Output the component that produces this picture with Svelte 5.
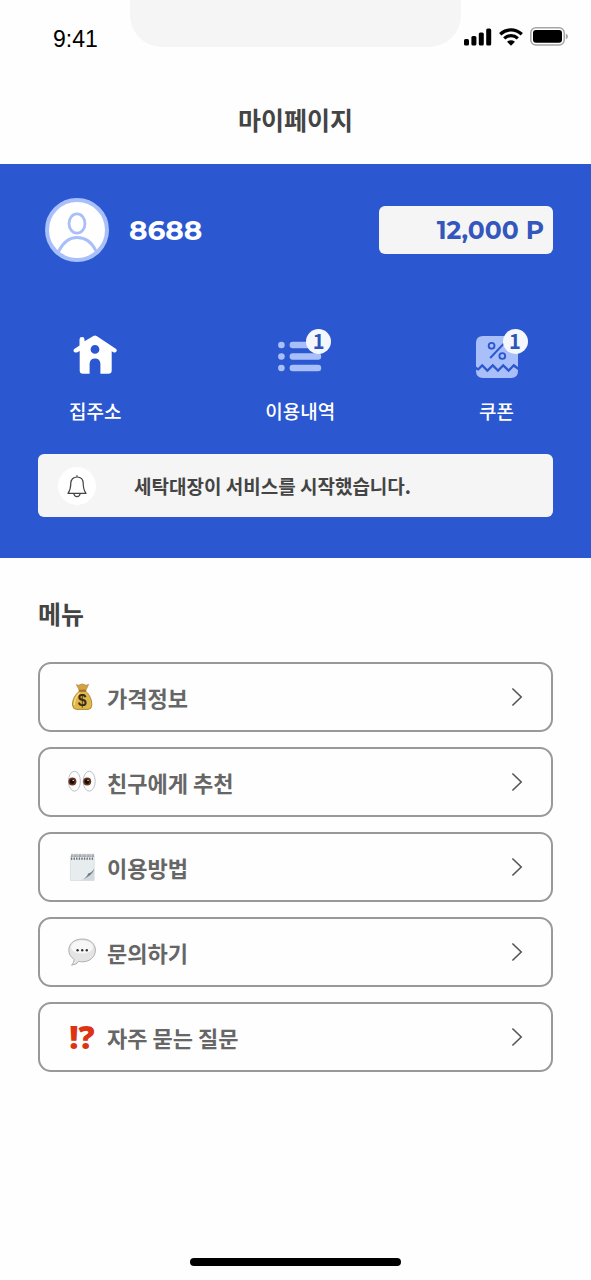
<script lang="ts">
  type Shortcut = { icon: "home" | "list" | "coupon", label: string, count?: number };
  type MenuItem = { icon: "money" | "eyes" | "note" | "chat" | "question", label: string };

  let userName = "8688";
  let points = 12000;
  let notice = "세탁대장이 서비스를 시작했습니다.";

  const shortcuts: Shortcut[] = [
    { icon: "home", label: "집주소" },
    { icon: "list", label: "이용내역", count: 1 },
    { icon: "coupon", label: "쿠폰", count: 1 }
  ];

  const menu: MenuItem[] = [
    { icon: "money", label: "가격정보" },
    { icon: "eyes", label: "친구에게 추천" },
    { icon: "note", label: "이용방법" },
    { icon: "chat", label: "문의하기" },
    { icon: "question", label: "자주 묻는 질문" }
  ];
</script>

<div class="page">
  <div class="status-bar">
    <span class="time">9:41</span>
    <div class="notch"></div>
    <div class="status-icons">
      <svg width="28" height="18" viewBox="0 0 28 18" aria-hidden="true">
        <rect x="0" y="11" width="5" height="6.5" rx="1.5" />
        <rect x="7.4" y="8" width="5" height="9.5" rx="1.5" />
        <rect x="14.8" y="4.4" width="5" height="13.1" rx="1.5" />
        <rect x="22.2" y="0.4" width="5" height="17.1" rx="1.5" />
      </svg>
      <svg width="24" height="18" viewBox="0 0 24 18" aria-hidden="true">
        <g fill="none" stroke="#000" stroke-width="3.2">
          <path d="M1.2 6.2Q6 1.8 12 1.8T22.8 6.2" />
          <path d="M5.2 10.4Q8.2 7.6 12 7.6T18.8 10.4" />
        </g>
        <path d="M8 13.7Q12 10.8 16 13.7L12 17.8Z" />
      </svg>
      <svg width="38" height="19" viewBox="0 0 38 19" aria-hidden="true">
        <rect x="0.8" y="0.8" width="33.4" height="17.2" rx="5" fill="#fff" stroke="#a5a5a5" stroke-width="1.5" />
        <rect x="3" y="3" width="29" height="12.8" rx="3" />
        <path d="M35.8 6.5Q38 7.6 38 9.5T35.8 12.5Z" fill="#a5a5a5" />
      </svg>
    </div>
  </div>

  <header>
    <h1>마이페이지</h1>
  </header>

  <section class="hero">
    <div class="profile">
      <svg width="64" height="64" viewBox="0 0 64 64" aria-hidden="true">
        <circle cx="32" cy="32" r="30" fill="#fff" stroke="#a9bffa" stroke-width="4" />
        <g fill="none" stroke="#a9bffa" stroke-width="2.8">
          <ellipse cx="32" cy="25.5" rx="8" ry="9.6" />
          <path d="M13.5 53.5C18 44.5 24 39.5 32 39.5S47 44.5 51 53" />
        </g>
      </svg>
      <strong class="name">{userName}</strong>
      <div class="points">{points.toLocaleString("en-US")} P</div>
    </div>

    <nav class="shortcuts">
      {#each shortcuts as item}
        <button type="button">
          <span class="icon">
            <svg width="44" height="44" viewBox="0 0 44 44" aria-hidden="true">
              {#if item.icon === "home"}
                <path fill="#fff" fill-rule="evenodd" d="M6.5 8V5.4Q6.5 3 9 3T11.5 5.4V7.3L20.4 2Q22 1 23.6 2L42.8 14.7Q44.4 16 43.4 17.6Q42.4 19 40.4 18.2L38.7 17.3V36.5Q38.7 39.7 35.4 39.7H27.4V29.8Q27 24.6 22 24.6T16.6 29.8V39.7H10Q6.7 39.7 6.7 36.5V17L3.8 18.4Q1.6 19 .8 17.6Q0 16 1.6 14.8L6.5 11.4ZM22 11A4.4 4.4 0 1 0 22 19.8A4.4 4.4 0 1 0 22 11Z" />
              {:else if item.icon === "list"}
                <g fill="#a9bffa">
                  {#each [11, 22.5, 34] as y}
                    <circle cx="3.4" cy={y} r="3.3" />
                    <rect x="11.6" y={y - 3.2} width="31.6" height="6.4" rx="3" />
                  {/each}
                </g>
              {:else}
                <path fill="#a9bffa" d="M1 9Q1 2 8 2H36Q43 2 43 9V33L38.7 29.8L33.6 35L28.2 29.8L23 35L17.8 29.8L12.4 35L7.2 29.8L3 34L1 32.6Z" />
                <path fill="#a9bffa" d="M1 35.8L3.4 36.8L7.2 33L12.4 38.2L17.8 33L23 38.2L28.2 33L33.6 38.2L38.7 33L43 36V37Q43 44 36 44H8Q1 44 1 37Z" />
                <g fill="none" stroke="#2b57d0" stroke-width="1.9">
                  <circle cx="16.6" cy="11.8" r="2.9" />
                  <circle cx="27.3" cy="22" r="2.9" />
                  <path d="M28.8 9.6L15.2 24" stroke-width="2" />
                </g>
              {/if}
            </svg>
            {#if item.count}
              <span class="badge">{item.count}</span>
            {/if}
          </span>
          <span>{item.label}</span>
        </button>
      {/each}
    </nav>

    <div class="notice">
      <span class="bell">
        <svg width="22" height="24" viewBox="0 0 22 24" fill="none" stroke="#444" stroke-width="1.2" stroke-linejoin="round" aria-hidden="true">
          <path d="M11 1.2V3M2 19.4C4.2 16.4 4.8 14 4.8 9.6C4.8 5.4 7.2 3 11 3S17.2 5.4 17.2 9.6C17.2 14 17.8 16.4 20 19.4Z" />
          <path d="M7.8 19.6Q8.4 22.6 11 22.6T14.2 19.6" />
        </svg>
      </span>
      <p>{notice}</p>
    </div>
  </section>

  <main>
    <h2>메뉴</h2>
    <ul>
      {#each menu as item}
        <li>
          <button type="button" class="menu-item">
            {#if item.icon === "question"}
              <span class="marks" aria-hidden="true"><span>!</span><span>?</span></span>
            {:else}
              <svg width="28" height="28" viewBox="0 0 28 28" aria-hidden="true">
                {#if item.icon === "money"}
                  <path d="M8.4 1.6Q10.6 3 12.3 1.6Q14.5 .2 16 1.6Q18.4 2.8 20.6 1.4L17.8 7.4H11.3Z" fill="#d2a244" stroke="#a87a2a" stroke-width=".6" />
                  <path d="M11.3 8.2C6.8 12 4.3 16.7 4.5 22Q4.7 26.2 8.5 26.4H20Q23.8 26.2 23.8 22C23.8 16.5 21.8 12 17.7 8.2Z" fill="#dfb74b" stroke="#a9802c" stroke-width=".9" />
                  <path d="M6.4 22C6.2 17 8.2 13 11.6 10" fill="none" stroke="#f5dc86" stroke-width="1.4" />
                  <rect x="10.6" y="6.8" width="7.8" height="2" rx="1" fill="#a96e2c" />
                  <text class="dollar" x="14.3" y="22.8" text-anchor="middle">$</text>
                {:else if item.icon === "eyes"}
                  {#each [6.4, 21.2] as x}
                    <ellipse cx={x} cy="13.2" rx="6" ry="10" fill="#fdfdfd" stroke="#bcc4cb" stroke-width="1" />
                    <circle cx={x - 2} cy="13.6" r="4" fill="#69361b" />
                    <circle cx={x - 2.2} cy="13.6" r="2.4" fill="#170d0a" />
                    <circle cx={x - 1.2} cy="12.4" r=".7" fill="#fff" />
                  {/each}
                {:else if item.icon === "note"}
                  <path d="M2.4 3.2H26.2V27.6H2.4Z" fill="#e7ecef" stroke="#cdd4d9" stroke-width=".6" />
                  <path d="M12.6 27.4Q19.5 25 20.4 20Q23.5 20 26.2 15.6V27.6Z" fill="#d3dade" />
                  <path d="M12.6 27.4Q18.6 25.4 20.2 20.6Q23.4 20.4 26.2 15.6Q25.4 22.4 12.6 27.4Z" fill="#6f7a82" />
                  {#each [3.6, 6.2, 8.8, 11.4, 14, 16.6, 19.2, 21.8, 24.4] as x}
                    <path d="M{x} 6V1.6Q{x + .7} .2 {x + 1.2} 1.6V4" fill="none" stroke="#7c8387" stroke-width=".7" />
                    <circle cx={x} cy="6" r=".8" fill="#4a5054" />
                  {/each}
                {:else}
                  <path d="M14.2 1C6.4 1 .8 5.6 .8 12C.8 16 2.7 19.3 6.2 21.4Q6 24.6 3.6 27.2Q8.8 26.6 10.8 23.4Q12.5 23.8 14.2 23.8C22 23.8 27.4 18.8 27.4 12.2C27.4 5.6 22 1 14.2 1Z" fill="#e4e4e4" stroke="#a8a8a8" stroke-width=".9" />
                  <ellipse cx="14" cy="9" rx="11" ry="6.6" fill="#f7f7f7" />
                  <g fill="#333">
                    <circle cx="9.6" cy="12.2" r="1.2" />
                    <circle cx="14.2" cy="12.2" r="1.2" />
                    <circle cx="18.8" cy="12.2" r="1.2" />
                  </g>
                {/if}
              </svg>
            {/if}
            <span>{item.label}</span>
            <svg class="chevron" width="12" height="20" viewBox="0 0 12 20" fill="none" stroke="#555" stroke-width="1.6" aria-hidden="true">
              <path d="M1.4 1.5L10.2 10L1.4 18.5" />
            </svg>
          </button>
        </li>
      {/each}
    </ul>
  </main>

  <div class="home-indicator"></div>
</div>

<style>
  :global(body) {
    margin: 0;
    background: #fefefe;
  }

  .page {
    min-height: 100vh;
    display: flex;
    flex-direction: column;
    font-family: "Noto Sans CJK KR", "Noto Sans", sans-serif;
    color: #444;
  }

  h1, h2, p, ul {
    margin: 0;
    padding: 0;
  }

  button {
    margin: 0;
    padding: 0;
    border: 0;
    background: none;
    font: inherit;
    color: inherit;
    cursor: pointer;
  }

  svg {
    display: block;
    flex-shrink: 0;
  }

  .status-bar {
    display: grid;
    grid-template-columns: 1fr 56% 1fr;
    height: 76px;
  }

  .time {
    padding-left: 53px;
    font: 23px/78px "Liberation Sans", Arial, sans-serif;
    color: #000;
  }

  .notch {
    height: 47px;
    border-radius: 0 0 32px 32px;
    background: #f5f5f5;
  }

  .status-icons {
    display: flex;
    align-items: center;
    justify-content: flex-end;
    gap: 7px;
    height: 73px;
    padding-right: 23px;
  }

  header {
    height: 88px;
    text-align: center;
  }

  h1, h2 {
    font-size: 25px;
    line-height: 36px;
    font-weight: 700;
  }

  h1 {
    padding-top: 25px;
  }

  .hero {
    padding: 34px 38px 41px;
    background: #2b57d0;
    color: #fff;
  }

  .profile {
    display: flex;
    align-items: center;
    padding-left: 7px;
    font-family: Montserrat, Inter, sans-serif;
  }

  .name {
    margin-left: 20px;
    font-size: 28px;
    font-weight: 700;
    line-height: 36px;
  }

  .points {
    box-sizing: border-box;
    width: 174px;
    margin-left: auto;
    padding-right: 9px;
    border-radius: 6px;
    background: #f5f5f5;
    color: #3357bd;
    font-size: 25px;
    font-weight: 700;
    line-height: 48px;
    text-align: right;
  }

  .shortcuts {
    display: flex;
    justify-content: space-between;
    padding: 72px 39px 30px 31px;
  }

  .shortcuts button {
    display: flex;
    flex-direction: column;
    align-items: center;
    gap: 19px;
    font-size: 19px;
    font-weight: 500;
    line-height: 27px;
  }

  .icon {
    position: relative;
    margin: 0 -5px;
  }

  .badge {
    position: absolute;
    top: -5px;
    left: 28px;
    width: 25px;
    height: 25px;
    border-radius: 50%;
    background: #f5f7ff;
    color: #2b57b8;
    font-size: 20px;
    font-weight: 700;
    line-height: 24px;
    text-align: center;
  }

  .notice {
    display: flex;
    align-items: center;
    gap: 38px;
    min-height: 63px;
    padding: 0 20px;
    border-radius: 6px;
    background: #f5f5f5;
    color: #444;
  }

  .bell {
    display: flex;
    align-items: center;
    justify-content: center;
    width: 38px;
    height: 38px;
    border-radius: 50%;
    background: #fff;
  }

  .notice p {
    font-size: 19px;
    font-weight: 700;
    line-height: 28px;
  }

  main {
    padding: 37px 38px;
  }

  ul {
    display: flex;
    flex-direction: column;
    gap: 15px;
    margin-top: 31px;
    list-style: none;
  }

  .menu-item {
    display: flex;
    align-items: center;
    gap: 11px;
    box-sizing: border-box;
    width: 100%;
    height: 70px;
    padding: 0 28px;
    border: 2px solid #999;
    border-radius: 13px;
    color: #666;
    font-size: 22px;
    font-weight: 700;
    line-height: 32px;
  }

  .dollar {
    fill: #3a2b15;
    font: 700 16px "Liberation Sans", Arial, sans-serif;
  }

  .marks {
    display: flex;
    justify-content: center;
    width: 28px;
    color: #dc3412;
    font: 900 32px/44px "Noto Sans", sans-serif;
  }

  .chevron {
    margin-left: auto;
  }

  .home-indicator {
    width: 211px;
    height: 8px;
    margin: auto auto 14px;
    border-radius: 4px;
    background: #000;
  }
</style>
